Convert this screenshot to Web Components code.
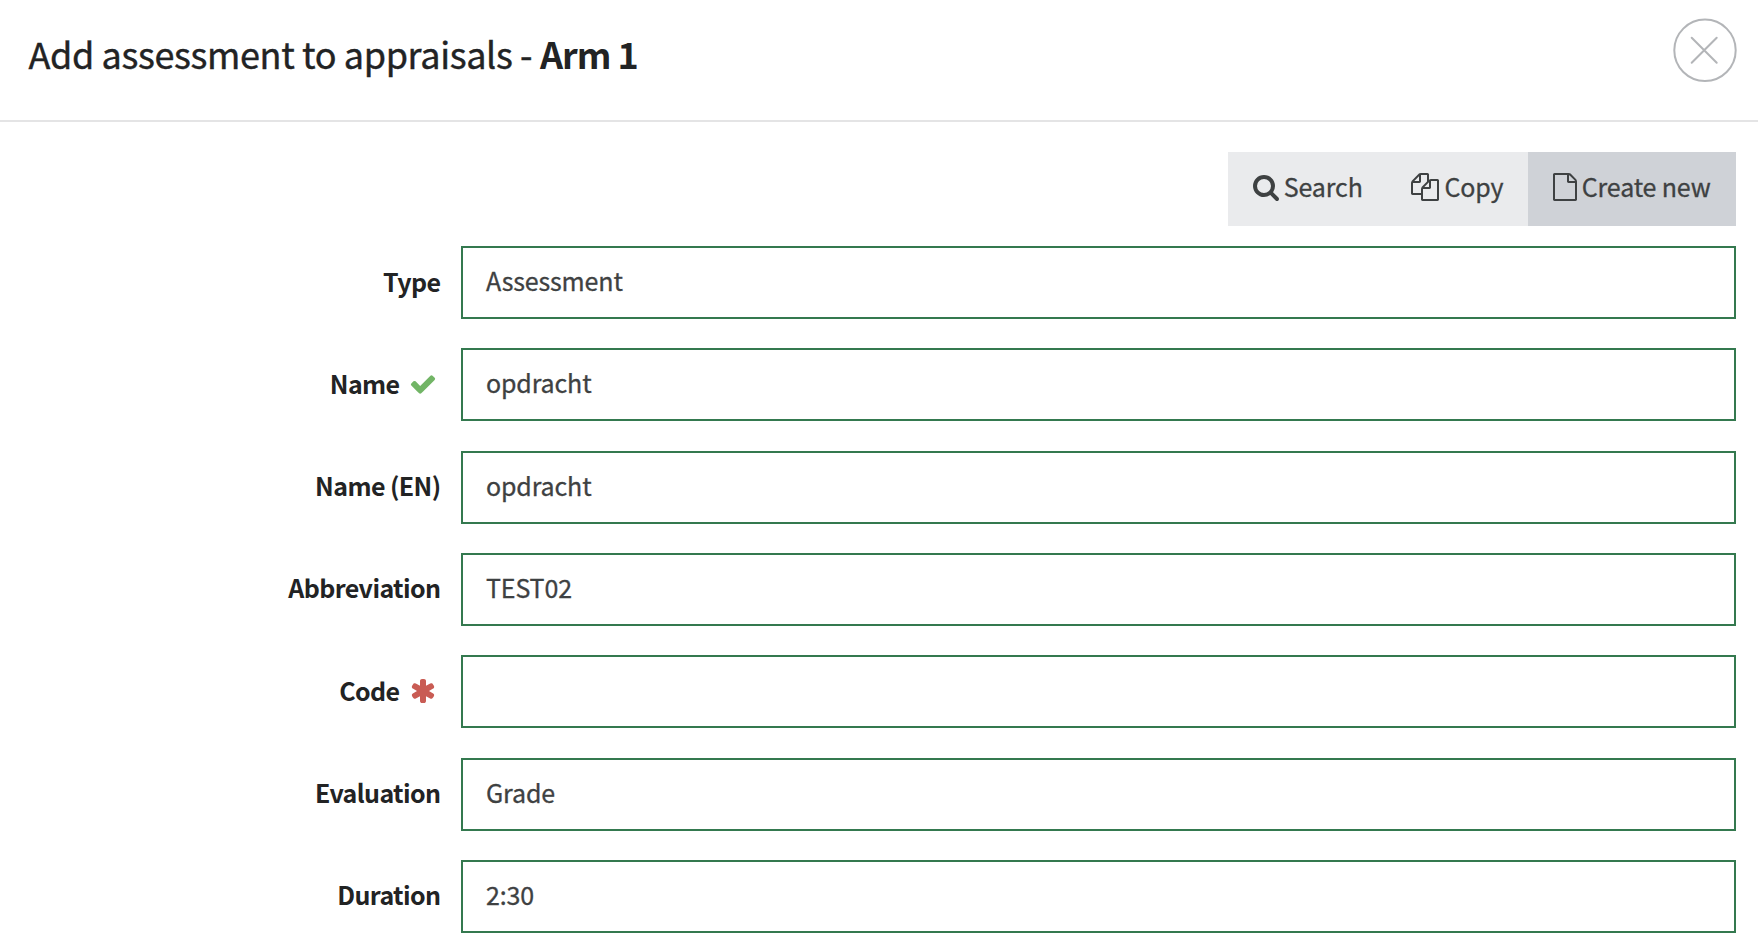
<!DOCTYPE html>
<html lang="en">
<head>
<meta charset="utf-8">
<title>Add assessment to appraisals</title>
<style>
body{
  margin: 0;
  background-color: #fff;
  font-family: "Source Sans Pro", "Noto Sans CJK SC", sans-serif;
  --myTitleColor: #222324;
  --myTextColor: #3e4142;
  --myBorderColor: #34794f;
}
</style>
</head>
<body>
<assessment-dialog>
  <dialog-header slot="header">Add assessment to appraisals - <b>Arm 1</b></dialog-header>
  <tab-bar slot="tabs">
    <tab-button icon="search">Search</tab-button>
    <tab-button icon="copy">Copy</tab-button>
    <tab-button icon="file" active>Create new</tab-button>
  </tab-bar>
  <form-field label="Type">Assessment</form-field>
  <form-field label="Name" state="check">opdracht</form-field>
  <form-field label="Name (EN)">opdracht</form-field>
  <form-field label="Abbreviation">TEST02</form-field>
  <form-field label="Code" state="asterisk"></form-field>
  <form-field label="Evaluation">Grade</form-field>
  <form-field label="Duration">2:30</form-field>
</assessment-dialog>

<script>
// viewBox is cut to the width of each glyph, 64 units = 1px
const icons = {
    search: {
        box: "64 0 1664 1792",
        path: "M1216 832q0-185-131.5-316.5t-316.5-131.5-316.5 131.5-131.5 316.5 131.5 316.5 316.5 131.5 316.5-131.5 131.5-316.5zm512 832q0 52-38 90t-90 38q-54 0-90-38l-343-342q-179 124-399 124-143 0-273.5-55.5t-225-150-150-225-55.5-273.5 55.5-273.5 150-225 225-150 273.5-55.5 273.5 55.5 225 150 150 225 55.5 273.5q0 220-124 399l343 343q37 37 37 90z"
    },
    copy: {
        box: "0 0 1792 1792",
        path: "M1696 384q40 0 68 28t28 68v1216q0 40-28 68t-68 28h-960q-40 0-68-28t-28-68v-288h-544q-40 0-68-28t-28-68v-672q0-40 20-88t48-76l408-408q28-28 76-48t88-20h416q40 0 68 28t28 68v328q68-40 128-40h416zm-544 213l-299 299h299v-299zm-640-384l-299 299h299v-299zm196 647l316-316v-416h-384v416q0 40-28 68t-68 28h-416v640h512v-256q0-40 20-88t48-76zm956 804v-1152h-384v416q0 40-28 68t-68 28h-416v640h896z"
    },
    file: {
        box: "128 0 1536 1792",
        path: "M1596 380q28 28 48 76t20 88v1152q0 40-28 68t-68 28h-1344q-40 0-68-28t-28-68v-1600q0-40 28-68t68-28h896q40 0 88 20t76 48zm-444-244v376h376q-10-29-22-41l-313-313q-12-12-41-22zm384 1528v-1024h-416q-40 0-68-28t-28-68v-416h-768v1536h1280z"
    },
    check: {
        box: "128 0 1536 1792",
        path: "M1671 566q0 40-28 68l-724 724-136 136q-28 28-68 28t-68-28l-136-136-362-362q-28-28-28-68t28-68l136-136q28-28 68-28t68 28l294 295 656-657q28-28 68-28t68 28l136 136q28 28 28 68z"
    },
    asterisk: {
        box: "128 0 1536 1792",
        path: "M1546 1050q46 26 59.5 77.5t-12.5 97.5l-64 110q-26 46-77.5 59.5t-97.5-12.5l-266-153v307q0 52-38 90t-90 38h-128q-52 0-90-38t-38-90v-307l-266 153q-46 26-97.5 12.5t-77.5-59.5l-64-110q-26-46-12.5-97.5t59.5-77.5l266-154-266-154q-46-26-59.5-77.5t12.5-97.5l64-110q26-46 77.5-59.5t97.5 12.5l266 153v-307q0-52 38-90t90-38h128q52 0 90 38t38 90v307l266-153q46-26 97.5-12.5t77.5 59.5l64 110q26 46 12.5 97.5t-59.5 77.5l-266 154z"
    }
}

class FormIcon extends HTMLElement {
    connectedCallback() {
        const icon = icons[this.getAttribute("name")]
        this.attachShadow({ mode: "open" })
        this.shadowRoot.innerHTML = `
<style>
:host{
  display: block;
  flex: none;
}
svg{
  display: block;
  height: 28px;
  overflow: visible;
}
</style>
<svg viewBox="${icon.box}"><path fill="currentColor" d="${icon.path}"/></svg>
`
    }
}
customElements.define("form-icon", FormIcon)

class DialogHeader extends HTMLElement {
    constructor() {
        super()
        this.attachShadow({ mode: "open" })
        this.shadowRoot.innerHTML = `
<style>
:host{
  display: flex;
  justify-content: space-between;
  align-items: flex-start;
  box-sizing: border-box;
  height: 122px;
  padding: 18px 21px 0 28.5px;
  border-bottom: 2px solid #e4e4e5;
  color: var(--myTitleColor);
}
.title{
  margin: 0;
  padding-top: 5px;
  font-size: 36px;
  line-height: 60px;
  font-weight: 400;
  letter-spacing: -0.37px;
  white-space: pre;
  -webkit-text-stroke: 0.4px currentColor;
}
::slotted(b){
  font-weight: 700;
  letter-spacing: -1px;
  -webkit-text-stroke: 0;
}
button{
  width: 65px;
  height: 65px;
  padding: 0;
  border: none;
  background: none;
  cursor: pointer;
}
svg{
  display: block;
  color: #b3b5b8;
}
</style>
<h1 class="title"><slot></slot></h1>
<button aria-label="Close">
  <svg width="65" height="65" viewBox="0 0 65 65" fill="none" stroke="currentColor" stroke-width="2">
    <circle cx="33" cy="32.3" r="30.7"/>
    <path d="M19.7 19.7l25 25M44.7 19.7l-25 25" stroke-linecap="round"/>
  </svg>
</button>
`
    }
}
customElements.define("dialog-header", DialogHeader)

class TabButton extends HTMLElement {
    connectedCallback() {
        this.attachShadow({ mode: "open" })
        this.shadowRoot.innerHTML = `
<style>
:host{
  display: flex;
  align-items: center;
  gap: 5px;
  height: 74px;
  padding: 0 24.4px;
  box-sizing: border-box;
  color: var(--myTextColor);
  font-size: 25px;
  line-height: 36px;
  letter-spacing: -0.15px;
  white-space: nowrap;
  cursor: pointer;
  -webkit-text-stroke: 0.3px currentColor;
}
:host([active]){
  padding: 0 25.4px 0 25px;
  background-color: #cfd2d7;
}
form-icon{
  margin-top: -4px;
}
span{
  padding-bottom: 6px;
}
</style>
<form-icon name="${this.getAttribute("icon")}"></form-icon>
<span><slot></slot></span>
`
    }
}
customElements.define("tab-button", TabButton)

class TabBar extends HTMLElement {
    constructor() {
        super()
        this.attachShadow({ mode: "open" })
        this.shadowRoot.innerHTML = `
<style>
:host{
  display: flex;
  background-color: #eaebed;
}
</style>
<slot></slot>
`
    }
}
customElements.define("tab-bar", TabBar)

class FormField extends HTMLElement {
    connectedCallback() {
        const state = this.getAttribute("state")
        this.attachShadow({ mode: "open" })
        this.shadowRoot.innerHTML = `
<style>
:host{
  display: grid;
  grid-template-columns: 440.5px 1fr;
  column-gap: 20.5px;
  height: 73px;
  font-size: 25px;
  line-height: 36px;
}
.label{
  display: flex;
  align-items: center;
  justify-content: flex-end;
  color: var(--myTitleColor);
  font-weight: 700;
  letter-spacing: -0.6px;
}
.label span{
  padding-bottom: 4px;
}
form-icon{
  margin: 0 5.5px 2px 11.5px;
}
.check{
  color: #72b566;
}
.asterisk{
  color: #c95c54;
}
.value{
  display: flex;
  align-items: center;
  box-sizing: border-box;
  padding: 0 23px 5px;
  border: 2px solid var(--myBorderColor);
  color: var(--myTextColor);
  letter-spacing: -0.15px;
  -webkit-text-stroke: 0.3px currentColor;
}
</style>
<div class="label"><span>${this.getAttribute("label")}</span>${state ? `<form-icon class="${state}" name="${state}"></form-icon>` : ""}</div>
<div class="value"><span><slot></slot></span></div>
`
    }
}
customElements.define("form-field", FormField)

class AssessmentDialog extends HTMLElement {
    constructor() {
        super()
        this.attachShadow({ mode: "open" })
        this.shadowRoot.innerHTML = `
<style>
:host{
  display: block;
  height: 944px;
  overflow: hidden;
}
.tabs{
  display: flex;
  justify-content: flex-end;
  padding: 30px 22px 20px;
}
.fields{
  display: grid;
  row-gap: 29.33px;
  padding-right: 22px;
}
</style>
<slot name="header"></slot>
<div class="tabs"><slot name="tabs"></slot></div>
<div class="fields"><slot></slot></div>
`
    }
}
customElements.define("assessment-dialog", AssessmentDialog)
</script>
</body>
</html>
